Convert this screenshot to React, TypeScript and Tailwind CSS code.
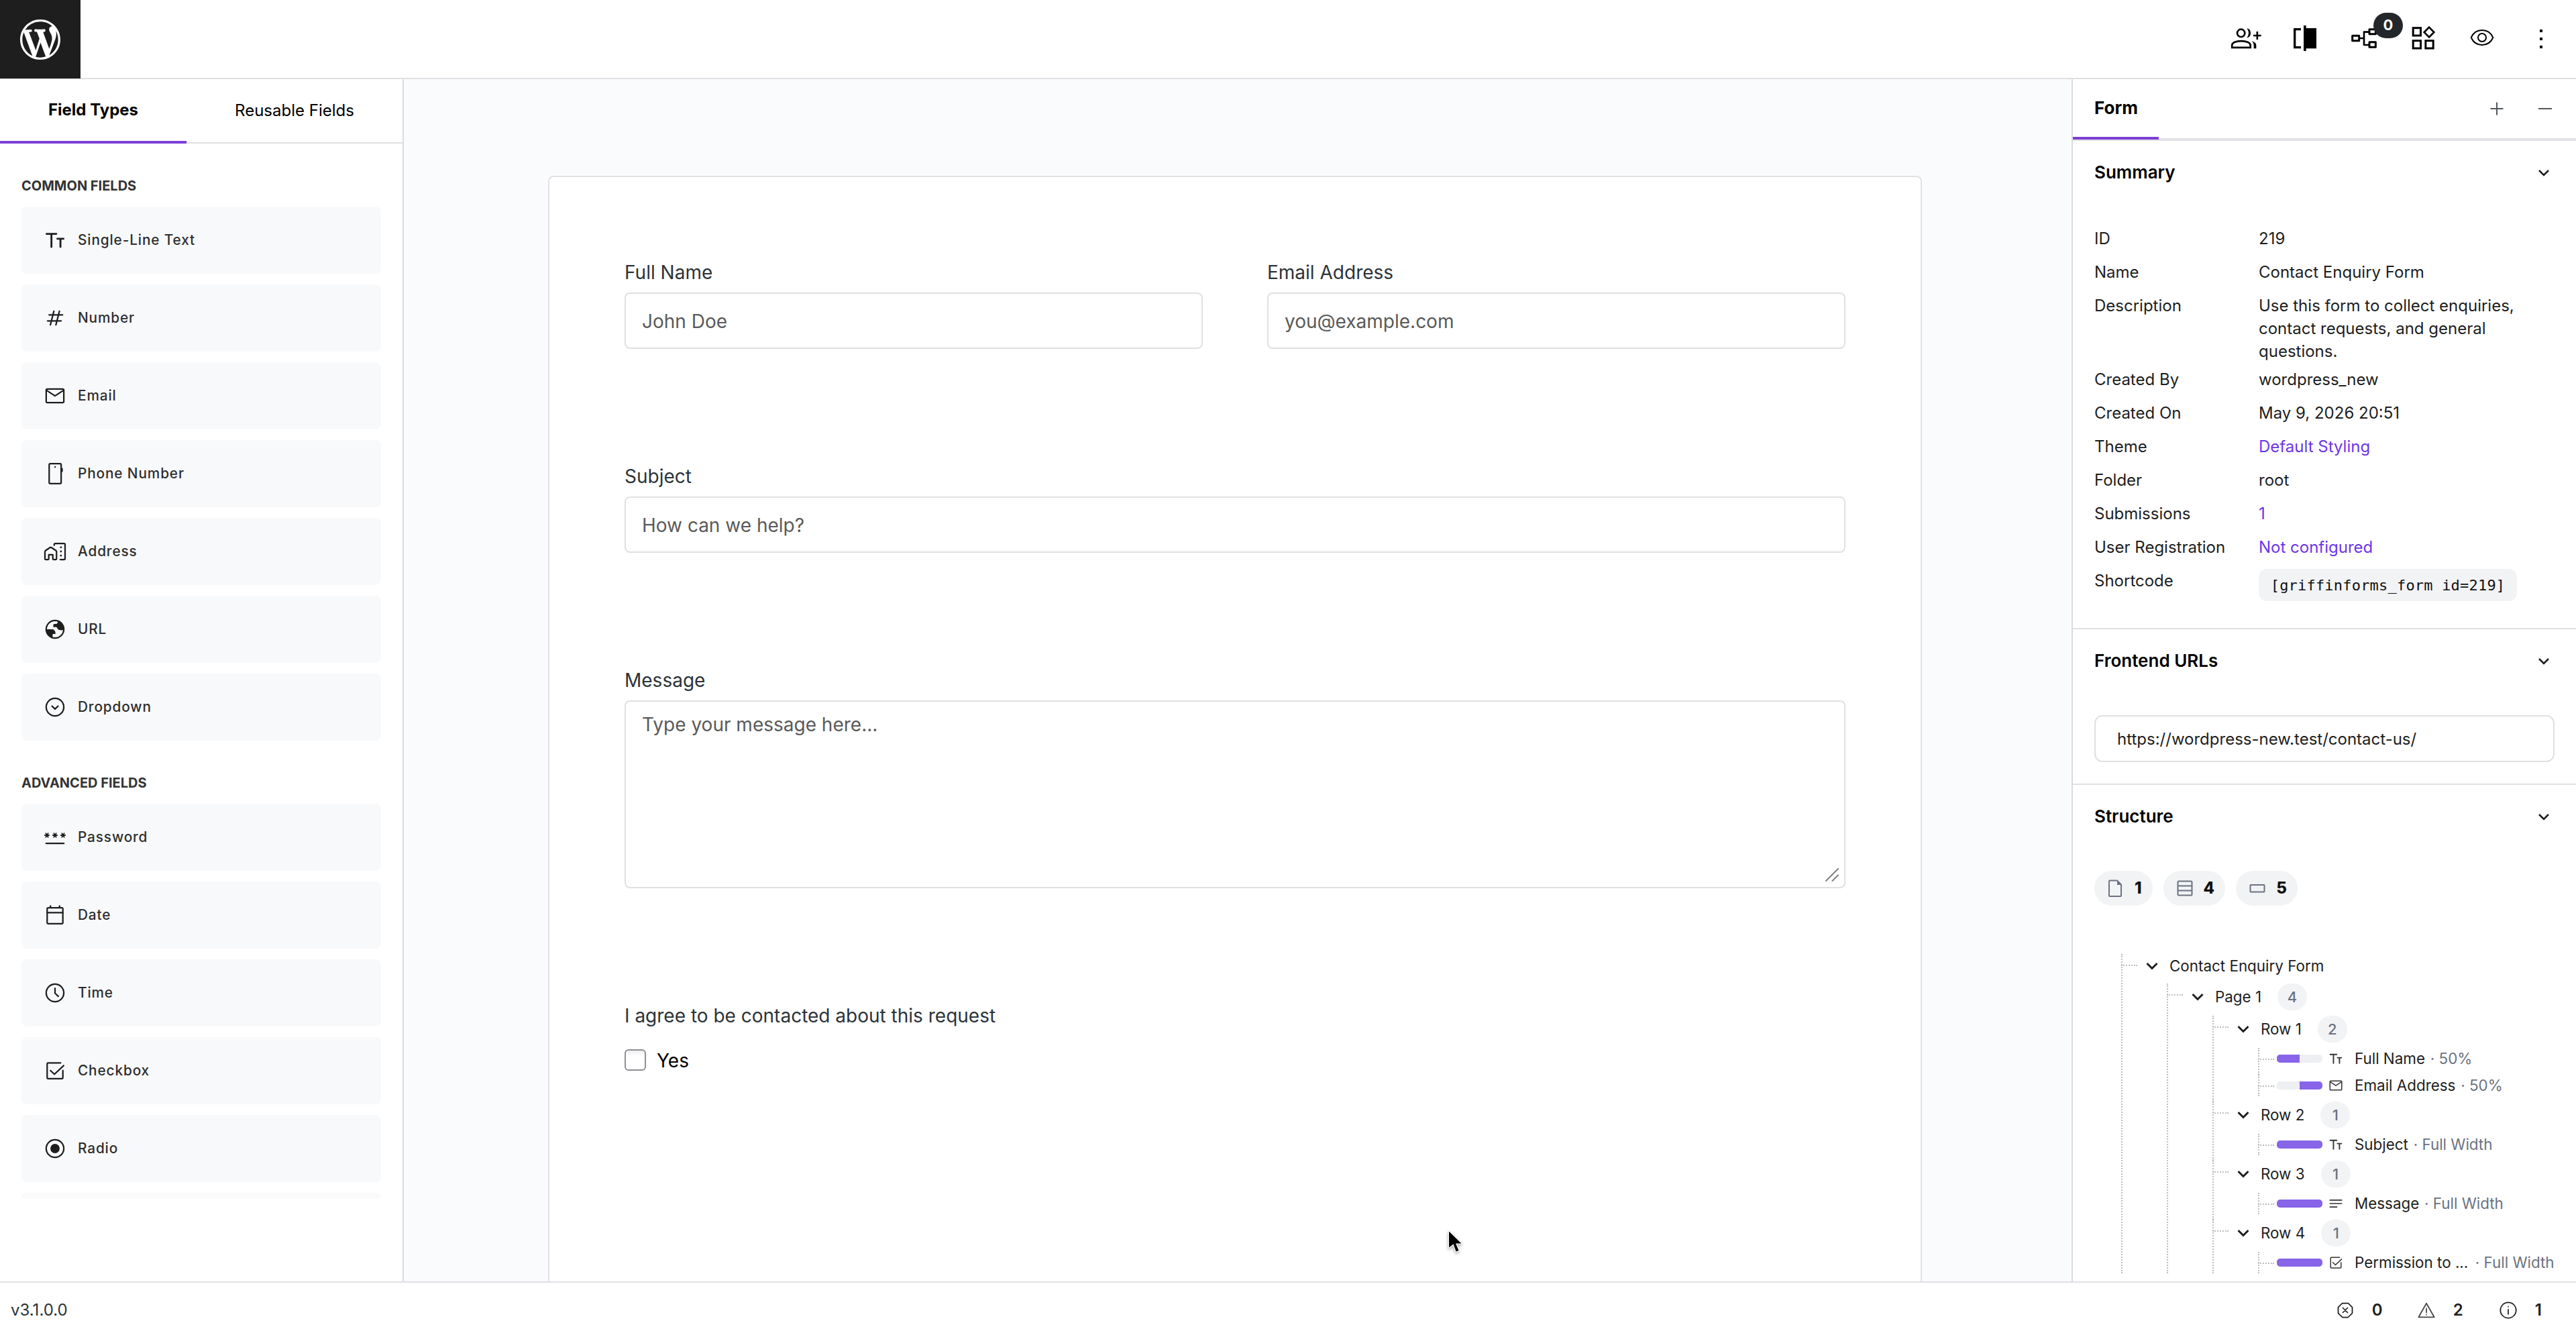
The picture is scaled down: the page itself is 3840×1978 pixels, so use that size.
import React from "react";

type P = { className?: string };

const S = ({ className = "", children, sw = 1.5 }: P & { children: React.ReactNode; sw?: number }) => (
  <svg viewBox="0 0 24 24" className={"shrink-0 " + className} fill="none" stroke="currentColor" strokeWidth={sw} strokeLinecap="round" strokeLinejoin="round">
    {children}
  </svg>
);

const TextIcon = ({ className = "" }: P) => (
  <S className={className} sw={1.9}>
    <path d="M3.6 5.7H13.3M8.45 5.7V18.7M14.4 10.6H20.4M17.4 10.6V18.7" />
  </S>
);
const HashIcon = ({ className = "" }: P) => (
  <S className={className}>
    <path d="M6.1 8.9H19.5M4.6 14.9H18.1M10.9 5.2L7.4 18.8M16.4 5.2L12.9 18.8" />
  </S>
);
const MailIcon = ({ className = "" }: P) => (
  <S className={className}>
    <rect x="3.25" y="5.25" width="17.5" height="13.5" rx="1.1" />
    <path d="M3.6 6.6L12 12.1L20.4 6.6" />
  </S>
);
const PhoneIcon = ({ className = "" }: P) => (
  <S className={className}>
    <rect x="6.2" y="2.1" width="11.9" height="19.8" rx="1.1" />
    <circle cx="12.1" cy="5.3" r="0.8" fill="currentColor" stroke="none" />
    <path d="M19 7.1V9.7" />
  </S>
);
const AddressIcon = ({ className = "" }: P) => (
  <S className={className}>
    <path d="M3 20Q2 20 2 19V12.2Q2 11.6 2.5 11.2L7.2 8Q7.75 7.7 8.3 8L13 11.2Q13.5 11.6 13.5 12.2V19Q13.5 20 12.5 20H10.8Q9.8 20 9.8 19V15.3H5.8V19Q5.8 20 4.8 20Z" />
    <path d="M11.2 5.9V5Q11.2 4 12.2 4H21Q22 4 22 5V19Q22 20 21 20H17.2" />
    <path d="M17.9 7.9V7.9M17.9 12V12M17.9 16.1V16.1" strokeWidth="1.9" />
  </S>
);
const GlobeIcon = ({ className = "" }: P) => (
  <S className={className}>
    <circle cx="12" cy="12" r="8.75" />
    <path stroke="none" fill="currentColor" d="M15.5 3.2L14.3 6Q13.8 6.6 13 6.6H11.3Q10.3 6.8 10.3 7.8V9.8H13.2Q14.2 10 14.4 11.2Q14.6 12.4 16 12.5L18.5 13L21 12.6Q21.5 6 15.5 3.2ZM3.1 12H9.5Q11.8 12.6 12.4 15V16.6H9.8Q9.6 17 9.6 20.8Q3.5 19 3.1 12Z" />
  </S>
);
const DropdownIcon = ({ className = "" }: P) => (
  <S className={className}>
    <circle cx="12" cy="12" r="8.75" />
    <path d="M9 11L12 13.9L15 11" />
  </S>
);
const PasswordIcon = ({ className = "" }: P) => (
  <S className={className} sw={1.2}>
    {[4, 12, 20].map((x) => (
      <path key={x} d={`M${x - 2.1} 10H${x + 2.1}M${x - 1.1} 8.1L${x + 1.1} 11.9M${x + 1.1} 8.1L${x - 1.1} 11.9`} />
    ))}
    <path d="M3.2 18.1H20.8" strokeWidth="1.5" />
  </S>
);
const DateIcon = ({ className = "" }: P) => (
  <S className={className}>
    <rect x="4.2" y="4.8" width="15.6" height="15.8" rx="1.1" />
    <path d="M4.2 9.5H19.8M7.5 2.9V4.6M16.5 2.9V4.6" />
  </S>
);
const TimeIcon = ({ className = "" }: P) => (
  <S className={className}>
    <circle cx="12" cy="12" r="8.75" />
    <path d="M12 7.4V12.3L15.3 15.4" />
  </S>
);
const CheckIcon = ({ className = "" }: P) => (
  <S className={className}>
    <path d="M17.6 4.2H5.2Q4.2 4.2 4.2 5.2V18.9Q4.2 19.9 5.2 19.9H18.8Q19.8 19.9 19.8 18.9V11.8" />
    <path d="M7.5 11.8L11.4 15.5L20.6 6.9" />
  </S>
);
const RadioIcon = ({ className = "" }: P) => (
  <S className={className}>
    <circle cx="12" cy="12" r="8.75" />
    <circle cx="12" cy="12" r="4.6" fill="currentColor" stroke="none" />
  </S>
);
const NotesIcon = ({ className = "" }: P) => (
  <S className={className} sw={1.7}>
    <path d="M3.4 6.8H20.6M3.4 12H20.6M3.4 17.2H13.4" />
  </S>
);

const common = [
  { label: "Single-Line Text", Icon: TextIcon },
  { label: "Number", Icon: HashIcon },
  { label: "Email", Icon: MailIcon },
  { label: "Phone Number", Icon: PhoneIcon },
  { label: "Address", Icon: AddressIcon },
  { label: "URL", Icon: GlobeIcon },
  { label: "Dropdown", Icon: DropdownIcon },
];
const advanced = [
  { label: "Password", Icon: PasswordIcon },
  { label: "Date", Icon: DateIcon },
  { label: "Time", Icon: TimeIcon },
  { label: "Checkbox", Icon: CheckIcon },
  { label: "Radio", Icon: RadioIcon },
];

const FieldList = ({ items }: { items: typeof common }) => (
  <>
    {items.map(({ label, Icon }) => (
      <div key={label} className="flex h-[100px] shrink-0 items-center gap-4 rounded-lg bg-[#f8f9fb] pl-8 text-[#1e1e1e]">
        <Icon className="size-9" />
        <span className="text-[20.8px] leading-none font-medium tracking-[0.86px] text-[#2e2e2e]">{label}</span>
      </div>
    ))}
  </>
);

const HeaderIcon = ({ x, children }: { x: number; children: React.ReactNode }) => (
  <svg viewBox={`${x} 72 144 144`} className="size-12" fill="none" stroke="#000" strokeWidth="8">
    {children}
  </svg>
);

const Header = () => (
  <header className="flex h-[118px] shrink-0 items-start justify-between border-b-2 border-[#e0e0e3]">
    <div className="flex h-[117px] w-[120px] items-center justify-center bg-[#1e1e1e]">
      <svg viewBox="0 0 20 20" className="size-[60px] fill-white">
        <path d="M20 10c0-5.51-4.49-10-10-10C4.48 0 0 4.49 0 10c0 5.52 4.48 10 10 10 5.51 0 10-4.48 10-10zM7.78 15.37L4.37 6.22c.55-.02 1.17-.08 1.17-.08.5-.06.44-1.13-.06-1.11 0 0-1.45.11-2.37.11-.18 0-.37 0-.58-.01C4.12 2.69 6.87 1.11 10 1.11c2.33 0 4.45.87 6.05 2.34-.68-.11-1.65.39-1.65 1.58 0 .74.45 1.36.9 2.1.35.61.55 1.36.55 2.46 0 1.49-1.4 5-1.4 5l-3.03-8.37c.54-.02.82-.17.82-.17.5-.05.44-1.25-.06-1.22 0 0-1.44.12-2.38.12-.87 0-2.33-.12-2.33-.12-.5-.03-.56 1.2-.06 1.22l.92.08 1.26 3.41zM17.41 10c.24-.64.74-1.87.43-4.25.7 1.29 1.05 2.71 1.05 4.25 0 3.29-1.73 6.24-4.4 7.78.97-2.59 1.94-5.2 2.92-7.78zM6.1 18.09C3.12 16.65 1.11 13.53 1.11 10c0-1.3.23-2.48.72-3.59C3.25 10.3 4.67 14.2 6.1 18.09zm4.03-6.63l2.58 6.98c-.86.29-1.76.45-2.71.45-.79 0-1.57-.11-2.29-.33.81-2.38 1.62-4.74 2.42-7.1z" />
      </svg>
    </div>
    <div className="flex h-[116px] items-center gap-10 pr-7">
      <HeaderIcon x={42}>
        <circle cx="92" cy="118" r="17" />
        <path d="M51.500 182.500V173C51.500 160 70 153.500 92.500 153.500S134 160 134 173V182.500Z" />
        <path stroke="none" fill="#000" d="M118 97Q135 99 135 118T118 139Q126 129 126 118T118 97ZM141 154Q160 160 160 173V187H149V172Q149 162 141 154Z" />
        <path d="M147 129H182M164.500 111V147" />
      </HeaderIcon>
      <HeaderIcon x={306}>
        <path d="M360 101H332V182H360" strokeWidth="10" />
        <path stroke="none" fill="#000" d="M372 84H383V96H429V187H383V198H372Z" />
      </HeaderIcon>
      <div className="relative flex">
        <HeaderIcon x={570}>
          <g strokeWidth="9" strokeLinejoin="round">
            <rect x="590" y="130" width="30" height="22" />
            <rect x="666" y="101" width="28" height="21" />
            <rect x="666" y="158" width="28" height="23" />
            <path d="M620 141H642M666 113H642V171H666" strokeWidth="8" />
          </g>
        </HeaderIcon>
        <span className="absolute -top-[15px] left-[38px] flex h-[38px] w-11 items-center justify-center rounded-full bg-[#23262a] pb-[3px] text-[22px] leading-none font-bold text-white">0</span>
      </div>
      <HeaderIcon x={834}>
        <g strokeWidth="9">
          <rect x="861.500" y="95" width="34" height="34" />
          <rect x="861.500" y="152" width="34" height="34" />
          <rect x="917.500" y="152" width="34" height="34" />
          <path d="M933 92L955 114L933 136L911 114Z" strokeWidth="8" />
        </g>
      </HeaderIcon>
      <HeaderIcon x={1098}>
        <g strokeWidth="6" strokeLinejoin="round">
          <path d="M1121 138C1130 118 1148 105 1170 105S1210 118 1219 138C1210 158 1192 171 1170 171S1130 158 1121 138Z" />
          <circle cx="1170" cy="138" r="18" />
        </g>
      </HeaderIcon>
      <HeaderIcon x={1362}>
        <path stroke="none" fill="#000" d="M1428 102h12v12h-12zM1428 138h12v12h-12zM1428 174h12v12h-12z" />
      </HeaderIcon>
    </div>
  </header>
);

const Sidebar = () => (
  <aside className="flex w-[602px] shrink-0 flex-col border-r-2 border-[#dcdcde] text-black">
    <div className="flex h-24 shrink-0 border-b-2 border-[#e0e0e0] text-[24px] leading-none">
      <div className="-mb-0.5 flex w-[278px] items-center justify-center border-b-4 border-[#7c3fd6] font-bold">Field Types</div>
      <div className="flex flex-1 items-center justify-center">Reusable Fields</div>
    </div>
    <div className="mx-8 flex h-[1572px] flex-col gap-4 overflow-hidden pt-[51px]">
      <h3 className="mb-[3px] h-6 shrink-0 text-[20px] leading-6 font-bold text-[#333]">COMMON FIELDS</h3>
      <FieldList items={common} />
      <h3 className="mt-[35px] mb-[3px] h-6 shrink-0 text-[20px] leading-6 font-bold text-[#333]">ADVANCED FIELDS</h3>
      <FieldList items={advanced} />
      <div className="h-[100px] shrink-0 rounded-lg bg-[#fafafa]" />
    </div>
  </aside>
);

const label = "h-9 text-[28px] leading-9 text-[#2c3338]";
const box = "rounded-lg border-2 border-[#e0e0e4] px-6 text-[28px] text-[#5a5a5a]";

const Canvas = () => (
  <main className="flex-1 overflow-hidden bg-[#fafbfd] pt-36 pl-[215px]">
    <div className="h-[1700px] w-[2048px] rounded-lg border-2 border-[#e2e2e6] bg-white px-28 pt-[124px] text-[#2c3338]">
      <div className="flex gap-24">
        <div className="flex-1">
          <div className={label}>Full Name</div>
          <div className={box + " mt-3 flex h-[84px] items-center pt-[2px]"}>John Doe</div>
        </div>
        <div className="flex-1">
          <div className={label}>Email Address</div>
          <div className={box + " mt-3 flex h-[84px] items-center pt-[2px]"}>you@example.com</div>
        </div>
      </div>
      <div className={label + " mt-[172px]"}>Subject</div>
      <div className={box + " mt-3 flex h-[84px] items-center pt-[2px]"}>How can we help?</div>
      <div className={label + " mt-[172px]"}>Message</div>
      <div className={box + " relative mt-3 h-[280px] pt-[13px]"}>
        Type your message here...
        <svg viewBox="0 0 20 20" className="absolute right-[8px] bottom-[8px] size-5" stroke="#808080" strokeWidth="2" strokeLinecap="round">
          <path d="M1 19L19 1M10.500 19L19 10.500" />
        </svg>
      </div>
      <div className={label + " mt-[172px]"}>I agree to be contacted about this request</div>
      <div className="mt-[30px] flex items-center gap-4 text-[28px] text-black">
        <span className="size-8 rounded-md border-2 border-[#8c8f94] bg-linear-to-b from-[#f0f0f0] to-white to-30%" />
        <span className="pt-[3px] leading-[33px]">Yes</span>
      </div>
    </div>
  </main>
);

const Chevron = () => (
  <svg viewBox="0 0 32 32" className="size-8" fill="none" stroke="#1e1e1e" strokeWidth="2.600">
    <path d="M9 13L16 20L23 13" />
  </svg>
);

const SectionHead = ({ title }: { title: string }) => (
  <div className="flex h-24 items-center justify-between px-8 pb-0.5">
    <span className="text-[26px] leading-none font-semibold text-black">{title}</span>
    <Chevron />
  </div>
);

const summary: [string, string, boolean?][] = [
  ["Created By", "wordpress_new"],
  ["Created On", "May 9, 2026 20:51"],
  ["Theme", "Default Styling", true],
  ["Folder", "root"],
  ["Submissions", "1", true],
  ["User Registration", "Not configured", true],
];

const Row = ({ k, v, link }: { k: string; v: string; link?: boolean }) => (
  <div className="flex h-[50px] leading-9">
    <span className="w-[245px]">{k}</span>
    <span className={link ? "text-[#6d35e8]" : ""}>{v}</span>
  </div>
);

/* One node of the structure tree: a dotted trunk, a dotted branch and its row. */
const Node = ({ row, h, last, children }: { row: React.ReactNode; h: string; last?: boolean; children?: React.ReactNode }) => (
  <li className="relative pl-[23px]">
    <span className={"absolute top-0 left-0 border-l-2 border-dotted border-[#bcbec2] " + (last ? "bottom-0" : "-bottom-2")} />
    <span className="absolute top-4 left-0 w-6 border-t-2 border-dotted border-[#bcbec2]" />
    <div className={"mb-2 flex items-center " + h}>{row}</div>
    {children}
  </li>
);

const Branch = ({ title, count }: { title: string; count?: string }) => (
  <>
    <svg viewBox="0 0 24 24" className="ml-[11px] size-6 shrink-0" fill="none" stroke="#1e1e1e" strokeWidth="3">
      <path d="M4.500 8L12 15.500L19.500 8" />
    </svg>
    <span className="ml-[14px] text-[22.4px] text-[#1e1e1e]">{title}</span>
    {count && <span className="ml-6 flex h-10 w-11 items-center justify-center rounded-full bg-[#f2f3f5] text-[22px] font-medium text-[#6b7280]">{count}</span>}
  </>
);

const Leaf = ({ Icon, title, width, bar = "full", clip = false }: { Icon: (p: P) => React.ReactNode; title: string; width: string; bar?: string; clip?: boolean }) => (
  <>
    <span className="ml-[5px] flex h-3 w-[68px] shrink-0 overflow-hidden rounded-[5px] bg-[#edeff3]">
      <span className={"h-full bg-[#8764e8] " + (bar === "full" ? "w-full" : bar === "left" ? "w-1/2" : "ml-[34px] w-1/2")} />
    </span>
    <Icon className="ml-2 size-6 text-[#333]" />
    <span className={"ml-4 whitespace-pre text-[22.4px] text-[#1e1e1e] " + (clip ? "w-[172px]" : "")}>{title}</span>
    <span className="ml-[1.5px] whitespace-pre text-[22.4px] text-[#6b7280]"> · {width}</span>
  </>
);

const FormRow = ({ title, count, children }: { title: string; count: string; children: React.ReactNode }) => (
  <Node h="h-10" last={title === "Row 4"} row={<Branch title={title} count={count} />}>
    <ul className="ml-[45px]">{children}</ul>
  </Node>
);

const Tree = () => (
  <ul className="ml-[40px] leading-8">
    <Node last h="h-9" row={<Branch title="Contact Enquiry Form" />}>
      <ul className="ml-[45px]">
        <Node last h="h-10" row={<Branch title="Page 1" count="4" />}>
          <ul className="ml-[45px]">
            <FormRow title="Row 1" count="2">
              <Node h="h-8" row={<Leaf Icon={TextIcon} title="Full Name" width="50%" bar="left" />} />
              <Node last h="h-8" row={<Leaf Icon={MailIcon} title="Email Address" width="50%" bar="right" />} />
            </FormRow>
            <FormRow title="Row 2" count="1">
              <Node last h="h-8" row={<Leaf Icon={TextIcon} title="Subject" width="Full Width" />} />
            </FormRow>
            <FormRow title="Row 3" count="1">
              <Node last h="h-8" row={<Leaf Icon={NotesIcon} title="Message" width="Full Width" />} />
            </FormRow>
            <FormRow title="Row 4" count="1">
              <Node last h="h-8" row={<Leaf Icon={CheckIcon} title="Permission to ..." width="Full Width" clip />} />
            </FormRow>
          </ul>
        </Node>
      </ul>
    </Node>
  </ul>
);

const Pill = ({ n, children }: { n: string; children: React.ReactNode }) => (
  <span className="flex h-[52px] items-center gap-3 rounded-full bg-[#f2f3f5] px-4 text-[24px] leading-none font-extrabold text-[#111]">
    <svg viewBox="0 0 32 32" className="size-8" fill="none" stroke="#6b7280" strokeWidth="2">
      {children}
    </svg>
    {n}
  </span>
);

const Panel = () => (
  <aside className="w-[752px] shrink-0 overflow-hidden border-l-2 border-[#dcdcde] text-[24px] text-[#1e1e1e]">
    <div className="flex h-[92px] justify-between border-b-4 border-[#e2e2e7]">
      <div className="flex h-[90px] w-32 items-center border-b-4 border-[#7c3fd6] pl-8 text-[26px] leading-none font-bold text-black">Form</div>
      <svg viewBox="0 0 104 32" className="mt-7 mr-[30px] h-8 w-[104px]" stroke="#50575e" strokeWidth="2">
        <path d="M6.500 16H25.500M16 6.500V25.500M78 16H98" />
      </svg>
    </div>
    <SectionHead title="Summary" />
    <div className="h-[632px] border-b-2 border-[#e0e0e5] pt-8 pl-8">
      <Row k="ID" v="219" />
      <Row k="Name" v="Contact Enquiry Form" />
      <div className="flex h-[110px] pt-px leading-[34px]">
        <span className="w-[245px]">Description</span>
        <span className="w-[400px]">Use this form to collect enquiries, contact requests, and general questions.</span>
      </div>
      {summary.map(([k, v, link]) => (
        <Row key={k} k={k} v={v} link={link} />
      ))}
      <div className="flex leading-9">
        <span className="w-[245px]">Shortcode</span>
        <code className="flex h-12 w-[385px] items-center justify-center rounded-xl bg-[#f2f3f5] pt-px font-['DejaVu_Sans_Mono',monospace] text-[22px] tracking-[0.2px] text-[#111]">[griffinforms_form id=219]</code>
      </div>
    </div>
    <SectionHead title="Frontend URLs" />
    <div className="h-[136px] border-b-2 border-[#e0e0e5] pt-8 pr-8 pl-8">
      <div className="flex h-[70px] items-center rounded-xl border-2 border-[#e0e0e4] pt-0.5 pl-8">https://wordpress-new.test/contact-us/</div>
    </div>
    <SectionHead title="Structure" />
    <div className="flex gap-4 pt-8 pl-8">
      <Pill n="1">
        <path d="M8 4.500H18L24 10.500V27Q24 28 23 28H7Q6 28 6 27V5.500Q6 4.500 7 4.500Z" />
        <path d="M18 4.500V11H24Z" fill="#6b7280" stroke="none" />
      </Pill>
      <Pill n="4">
        <rect x="5.500" y="5.500" width="21" height="21" rx="1.500" />
        <path d="M5.500 12.500H26.500M5.500 19.500H26.500" />
      </Pill>
      <Pill n="5">
        <rect x="5.500" y="11" width="21" height="10.500" rx="0.800" />
      </Pill>
    </div>
    <div className="pt-[72px] pl-8">
      <Tree />
    </div>
  </aside>
);

const Footer = () => (
  <footer className="flex h-[68px] shrink-0 items-center justify-between border-t-2 border-[#e0e0e5] pt-[15px] pl-4 text-[24px] leading-none text-[#2c3338]">
    <span>v3.1.0.0</span>
    <div className="grid grid-cols-[121px_122px_auto] pr-[51px] font-semibold text-[#1e1e1e]">
      <div className="flex items-center gap-[26px]">
        <S className="size-7">
          <path d="M8.300 3H15.700L21 8.300V15.700L15.700 21H8.300L3 15.700V8.300ZM9 9L15 15M15 9L9 15" />
        </S>
        <span>0</span>
      </div>
      <div className="flex items-center gap-[26px]">
        <S className="size-7 text-[#444]">
          <path d="M12 3.200L22 20.800H2ZM12 9.800V15M12 17.600V17.800" />
        </S>
        <span>2</span>
      </div>
      <div className="flex items-center gap-[26px]">
        <S className="size-7">
          <circle cx="12" cy="12" r="10" />
          <path d="M12 11V17M12 7.300V7.500" />
        </S>
        <span>1</span>
      </div>
    </div>
  </footer>
);

export default function App() {
  return (
    <div className="relative flex h-[1978px] w-[3840px] flex-col overflow-hidden bg-white font-[Inter,sans-serif]">
      <Header />
      <div className="flex min-h-0 flex-1">
        <Sidebar />
        <Canvas />
        <Panel />
      </div>
      <Footer />
      <svg viewBox="0 0 28 40" className="absolute top-[1832px] left-[2156px] h-10 w-7 drop-shadow-[0_2px_2px_rgba(0,0,0,0.35)]">
        <path d="M4 3.500V27.500L10.500 22.500L14.500 33.500L18.500 32L14 21.500H22.500Z" fill="#000" stroke="#fff" strokeWidth="2.400" strokeLinejoin="round" paintOrder="stroke" />
      </svg>
    </div>
  );
}
